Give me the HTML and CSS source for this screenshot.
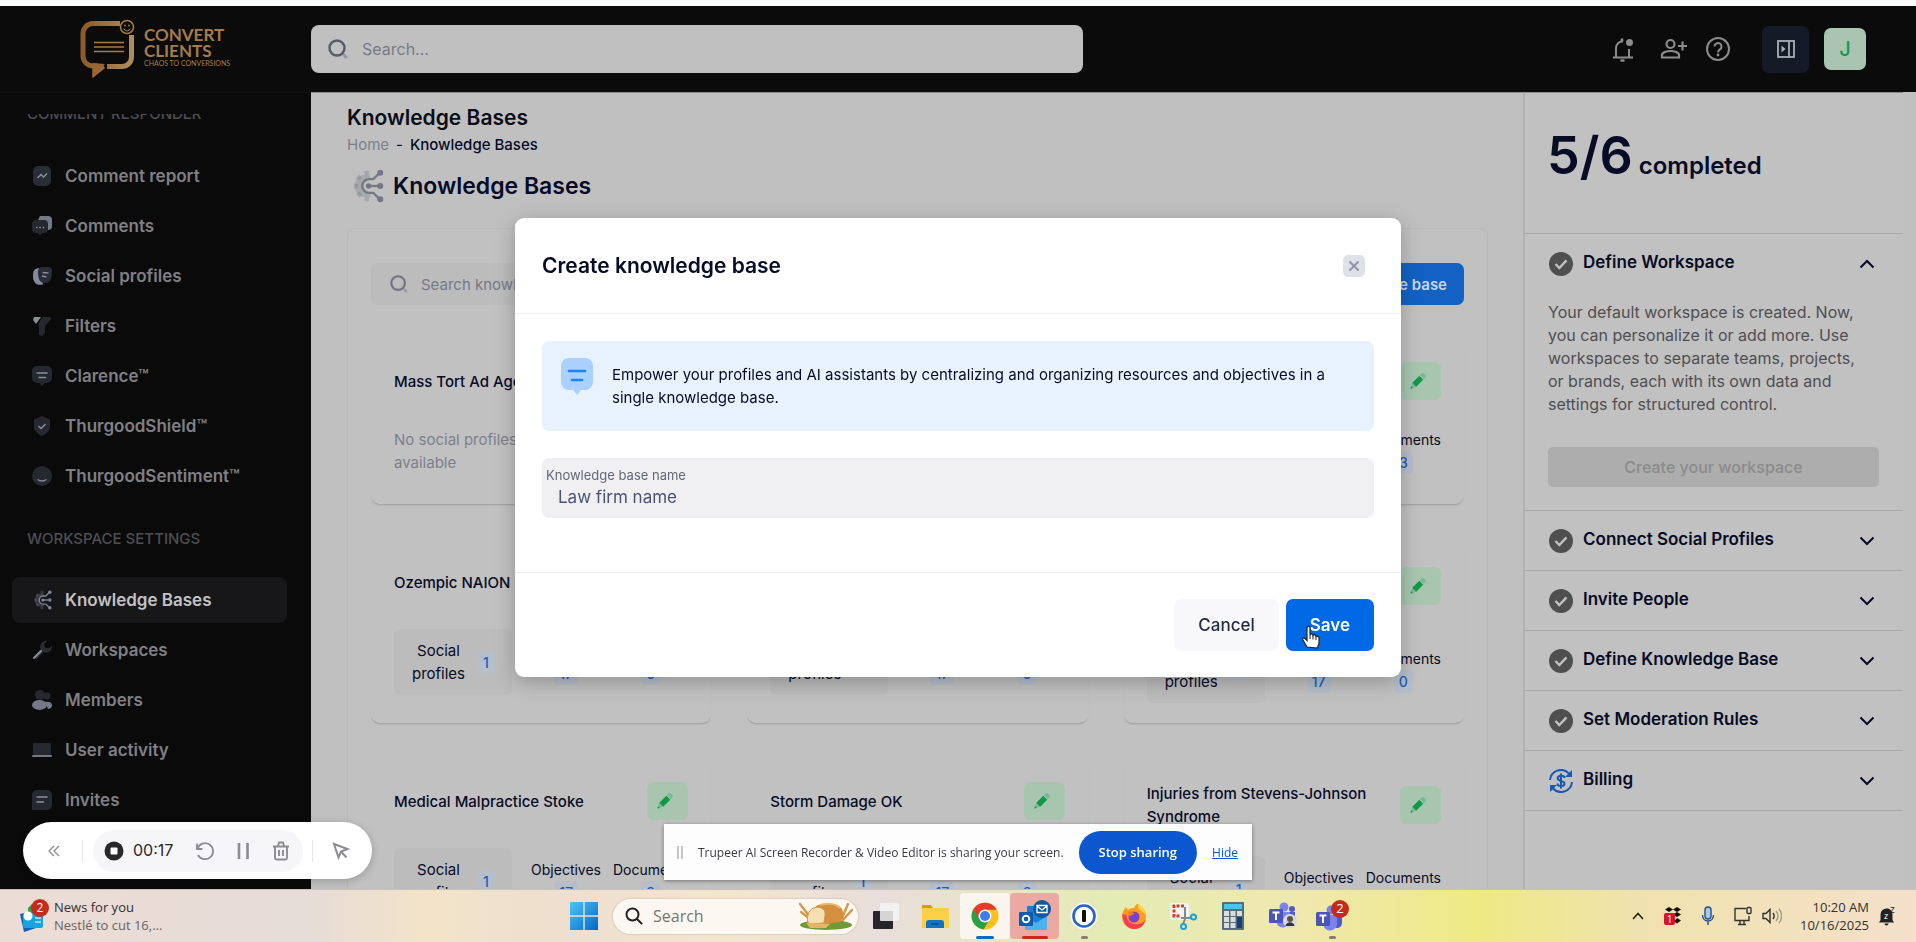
FILE: index.html
```html
<!DOCTYPE html>
<html lang="en">
<head>
  <meta charset="UTF-8" />
  <meta name="viewport" content="width=device-width, initial-scale=1.0"/>
  <title>Knowledge Bases</title>
  <link rel="stylesheet" href="styles.css">
</head>
<body>
  <!-- Shared icons -->
  <svg class="sprite" aria-hidden="true">
    <symbol id="i-search" viewBox="0 0 22 22">
      <circle cx="10" cy="10" r="7.5" fill="none" stroke="currentColor" stroke-width="2.4"/>
      <path d="M16 16l3 3" stroke="currentColor" stroke-width="3" stroke-linecap="round" opacity=".4"/>
    </symbol>
    <symbol id="i-pencil" viewBox="0 0 20 20">
      <path d="M13.6 2.6a1.6 1.6 0 0 1 2.3 0l1.5 1.5a1.6 1.6 0 0 1 0 2.3l-1.6 1.5-3.8-3.8z" fill="#0e9a45" opacity=".3"/>
      <path d="M11.3 4.8l3.9 3.9-7 7-3.9-3.9z" fill="#0e9a45"/>
      <path d="M4.3 11.8l3.9 3.9-4.9 1.6a.6.6 0 0 1-.7-.7z" fill="#0e9a45" opacity=".3"/>
      <path d="M3 15.2l1.8 1.8-1.7.5a.5.5 0 0 1-.6-.6z" fill="#0e9a45"/>
    </symbol>
    <symbol id="i-check" viewBox="0 0 24 24">
      <circle cx="12" cy="12" r="12" fill="#4f4f4f"/>
      <path d="M6.5 12l3.8 4 7.2-7.6" fill="none" stroke="#c0c0c0" stroke-width="2.4"/>
    </symbol>
    <symbol id="i-down" viewBox="0 0 16 10">
      <path d="M1.5 1.5L8 8l6.5-6.5" fill="none" stroke="#060b26" stroke-width="2"/>
    </symbol>
    <symbol id="i-up" viewBox="0 0 16 10">
      <path d="M1.5 8.5L8 2l6.5 6.5" fill="none" stroke="#060b26" stroke-width="2"/>
    </symbol>
    <symbol id="i-knowledge" viewBox="0 0 32 32">
      <path d="M19 5.5H15a10.5 10.5 0 0 0 0 21h4v-3.500a7 7 0 0 1 0-14z" fill="currentColor" opacity=".32"/>
      <path d="M18 3.500A12.500 12.500 0 0 0 18 28.500" fill="none" stroke="currentColor" stroke-width="4" stroke-dasharray="4.500 4.200" opacity=".32"/>
      <g fill="none" stroke="currentColor" stroke-width="2.2">
        <path d="M28 3.5l-6 6h-4a6.5 6.5 0 0 0 0 13h4l6 6"/>
        <path d="M16 16h12"/>
      </g>
      <g fill="currentColor">
        <circle cx="28.5" cy="3.5" r="2.8"/><circle cx="28.5" cy="16" r="2.8"/>
        <circle cx="28.5" cy="28.5" r="2.8"/><circle cx="17.5" cy="16" r="2.6"/>
      </g>
    </symbol>
    <symbol id="i-bubble" viewBox="0 0 20 20">
      <path d="M5 0h10a5 5 0 0 1 5 5v7a5 5 0 0 1-5 5h-2.5L10 20l-2.5-3H5a5 5 0 0 1-5-5V5a5 5 0 0 1 5-5z" fill="#25282f"/>
      <path d="M5 7h10M7 11.5h6.5" stroke="#8a8e9b" stroke-width="1.6" stroke-linecap="round"/>
    </symbol>
    <symbol id="i-teams" viewBox="0 0 28 28">
      <circle cx="16" cy="6" r="4.5" fill="#7b83eb"/><circle cx="24" cy="8" r="3" fill="#5059c9"/>
      <path d="M19 11h8v8a5 5 0 0 1-8 4z" fill="#5059c9"/>
      <path d="M9 11h13v9a7 7 0 0 1-13 3z" fill="#7b83eb"/>
      <rect x="1" y="8" width="14" height="14" rx="1.5" fill="#4b53bc"/>
      <path d="M4.5 11.5h7M8 11.5v7.5" stroke="#fff" stroke-width="2"/>
    </symbol>
  </svg>

  <header class="topbar">
    <div class="brand">
      <svg class="brand-mark" viewBox="0 0 56 60">
        <defs>
          <linearGradient id="gold" x1="0" x2="1">
            <stop offset="0" stop-color="#8f5a2a"/><stop offset="1" stop-color="#b08c5c"/>
          </linearGradient>
        </defs>
        <path d="M40 4.5H13a10 10 0 0 0-10 10v23a10 10 0 0 0 10 9.5h2v7l8.500-7M27 47.500h15a9.500 9.500 0 0 0 9.500-9.500V16" fill="none" stroke="url(#gold)" stroke-width="5"/>
        <path d="M12.500 44v15L25 45z" fill="#9a6433"/>
        <path d="M14 23.500h30M14 28h30M14 32.500h30" stroke="#a57c49" stroke-width="1.3"/>
        <circle cx="47" cy="8" r="6.500" fill="#0b0b0b" stroke="#a57c49" stroke-width="1.5"/>
        <path d="M43.800 9.500a3.300 3.300 0 0 0 6.400 0" fill="none" stroke="#a57c49"/>
        <circle cx="45" cy="6.500" r=".9" fill="#a57c49"/><circle cx="49" cy="6.500" r=".9" fill="#a57c49"/>
      </svg>
      <div class="brand-text">
        <span>CONVERT</span>
        <span>CLIENTS</span>
        <small>CHAOS TO CONVERSIONS</small>
      </div>
    </div>
    <div class="top-search">
      <svg class="icon-22"><use href="#i-search"/></svg>
      <input type="search" placeholder="Search..." aria-label="Search">
    </div>
    <div class="top-actions">
      <button class="icon-btn" aria-label="Notifications">
        <svg width="24" height="26" viewBox="0 0 24 26" fill="none" stroke="currentColor" stroke-width="2">
          <path d="M2 21.500h20M5 21.500V12a6.500 6.500 0 0 1 7-6.500M18 21.500V13"/>
          <path d="M11 2.500v3M9.500 24.500h4" stroke-width="2.6"/>
          <circle cx="18.500" cy="6.500" r="3.500" fill="currentColor" stroke="none"/>
        </svg>
      </button>
      <button class="icon-btn invite" aria-label="Invite people">
        <svg width="28" height="22" viewBox="0 0 28 22" fill="none" stroke="currentColor" stroke-width="2.2">
          <circle cx="10.500" cy="6" r="4"/>
          <path d="M2 19.500v-2.500c0-2.500 5-4 8.500-4s8.500 1.500 8.500 4v2.500zM22.500 3.500v9M18 8h9"/>
        </svg>
      </button>
      <button class="icon-btn help" aria-label="Help">
        <svg width="26" height="26" viewBox="0 0 26 26" fill="none" stroke="currentColor" stroke-width="2">
          <circle cx="13" cy="13" r="11"/>
          <path d="M9.500 10.500a3.500 3.500 0 1 1 5.500 2.900c-1.300.9-2 1.500-2 3"/>
          <circle cx="13" cy="19" r="1.4" fill="currentColor" stroke="none"/>
        </svg>
      </button>
      <button class="panel-btn" aria-label="Toggle panel">
        <svg width="18" height="18" viewBox="0 0 18 18" fill="none" stroke="currentColor" stroke-width="1.8">
          <rect x="1" y="1" width="16" height="16"/>
          <path d="M12 1v16"/><path d="M4.500 5.500v7L8.500 9z" fill="currentColor" stroke="none"/>
        </svg>
      </button>
      <button class="avatar">J</button>
    </div>
  </header>

  <div class="shell">
    <!-- Left navigation -->
    <nav class="sidebar">
      <div class="sidebar-scroll">
        <h6 class="nav-heading">COMMENT RESPONDER</h6>
        <a class="nav-item" href="#">
          <svg class="nav-icon" viewBox="0 0 20 20"><rect x="1" width="18" height="20" rx="5" fill="#2a2d35"/><path d="M5.500 12l3.500-3.500 2.500 2.500L15 7.500" fill="none" stroke="#8a8e9b" stroke-width="1.5"/></svg>
          Comment report
        </a>
        <a class="nav-item" href="#">
          <svg class="nav-icon" viewBox="0 0 20 20"><path d="M8 0h8a4 4 0 0 1 4 4v6a4 4 0 0 1-4 4L6 4z" fill="#747887"/><rect y="4" width="16" height="13" rx="4" fill="#25282f"/><path d="M5.500 16.500L8 20l2.500-3.500z" fill="#25282f"/><path d="M4 11.500h1.500M7.300 11.500h1.500M10.600 11.500h1.500" stroke="#8a8e9b" stroke-width="1.5"/></svg>
          Comments
        </a>
        <a class="nav-item" href="#">
          <svg class="nav-icon" viewBox="0 0 20 20"><path d="M8 2C2 2 1 5 1 10c0 6 3 10 10 8.500z" fill="#8589a0"/><path d="M10 1h6a4 4 0 0 1 4 4c0 8-2 12-7 12-5 0-7-4-7-10 0-4 1-6 4-6z" fill="#2a2d35"/><path d="M10.500 6.500l6 .5M10 10l4.500 1" stroke="#8a8e9b" stroke-width="1.5"/></svg>
          Social profiles
        </a>
        <a class="nav-item" href="#">
          <svg class="nav-icon" viewBox="0 0 20 20"><path d="M2 1h7L4 8 1 4z" fill="#8a8e9b"/><path d="M10.500 1H18a1.200 1.200 0 0 1 1 2l-6 7v7l-3 3-3-1v-9l-1-1.500z" fill="#25282f"/></svg>
          Filters
        </a>
        <a class="nav-item" href="#">
          <svg class="nav-icon"><use href="#i-bubble"/></svg>
          Clarence™
        </a>
        <a class="nav-item" href="#">
          <svg class="nav-icon" viewBox="0 0 20 20"><path d="M10 0l8 3.500V11c0 4-4 7-8 9-4-2-8-5-8-9V3.500z" fill="#25282f"/><path d="M6.500 10l2.500 2.500L13.500 8" fill="none" stroke="#8a8e9b" stroke-width="1.5"/></svg>
          ThurgoodShield™
        </a>
        <a class="nav-item" href="#">
          <svg class="nav-icon" viewBox="0 0 20 20"><circle cx="10" cy="10" r="10" fill="#25282f"/><path d="M5.500 13.500c3 2 6 2 9 0" fill="none" stroke="#8a8e9b" stroke-width="1.5"/></svg>
          ThurgoodSentiment™
        </a>
        <h6 class="nav-heading">WORKSPACE SETTINGS</h6>
        <a class="nav-item active" href="#">
          <svg class="nav-icon"><use href="#i-knowledge"/></svg>
          Knowledge Bases
        </a>
        <a class="nav-item" href="#">
          <svg class="nav-icon" viewBox="0 0 20 20"><path d="M3 18L12 9" stroke="#2a2c32" stroke-width="4"/><path d="M15.500 1a6 6 0 1 0 4.500 5l-3.500 2.500-3.500-1-1-3.500z" fill="#2a2c32"/><path d="M2 18l7-7" stroke="#8a8e9b" stroke-width="2" stroke-linecap="round"/></svg>
          Workspaces
        </a>
        <a class="nav-item" href="#">
          <svg class="nav-icon" viewBox="0 0 20 20"><circle cx="8" cy="5" r="5" fill="#25282f"/><circle cx="15" cy="6" r="3.500" fill="#25282f"/><path d="M13 12c5-1 7 1 7 3.500 0 2-2 3.500-4 3.500z" fill="#747887"/><ellipse cx="7.500" cy="15" rx="7.500" ry="5" fill="#747887"/></svg>
          Members
        </a>
        <a class="nav-item" href="#">
          <svg class="nav-icon" viewBox="0 0 20 20"><rect x="1" y="3" width="18" height="12" rx="1" fill="#25282f"/><rect y="15" width="20" height="2" rx="1" fill="#747887"/></svg>
          User activity
        </a>
        <a class="nav-item" href="#">
          <svg class="nav-icon" viewBox="0 0 20 20"><path d="M5 0h10a5 5 0 0 1 5 5v10a5 5 0 0 1-5 5H0V5a5 5 0 0 1 5-5z" fill="#25282f"/><path d="M5 7h10M5 12h6.500" stroke="#8a8e9b" stroke-width="1.5" stroke-linecap="round"/></svg>
          Invites
        </a>
      </div>
    </nav>

    <!-- Page content -->
    <main class="content">
      <h1 class="page-title">Knowledge Bases</h1>
      <div class="breadcrumb"><a href="#">Home</a><span>-</span><b>Knowledge Bases</b></div>
      <h2 class="section-title"><svg class="icon-32"><use href="#i-knowledge"/></svg>Knowledge Bases</h2>

      <section class="board">
        <div class="board-tools">
          <div class="board-search">
            <svg class="icon-20"><use href="#i-search"/></svg>
            <input type="search" placeholder="Search knowledge base" aria-label="Search knowledge base">
          </div>
          <button class="btn-add">Create knowledge base</button>
        </div>

        <div class="cards">
          <article class="card">
            <div class="card-head"><h3>Mass Tort Ad Agency</h3><button class="edit" aria-label="Edit"><svg class="icon-20"><use href="#i-pencil"/></svg></button></div>
            <div class="card-stats plain">
              <p class="none">No social profiles available</p>
              <div class="stat">Objectives<span class="badge">0</span></div>
              <div class="stat">Documents<span class="badge">0</span></div>
            </div>
          </article>
          <article class="card">
            <div class="card-head"><h3></h3><button class="edit" aria-label="Edit"><svg class="icon-20"><use href="#i-pencil"/></svg></button></div>
          </article>
          <article class="card">
            <div class="card-head"><h3></h3><button class="edit" aria-label="Edit"><svg class="icon-20"><use href="#i-pencil"/></svg></button></div>
            <div class="card-stats plain">
              <p class="none"></p>
              <div class="stat">Objectives<span class="badge">0</span></div>
              <div class="stat">Documents<span class="badge">3</span></div>
            </div>
          </article>

          <article class="card">
            <div class="card-head"><h3>Ozempic NAION</h3><button class="edit" aria-label="Edit"><svg class="icon-20"><use href="#i-pencil"/></svg></button></div>
            <div class="card-stats">
              <div class="social"><span>Social profiles</span><span class="badge">1</span></div>
              <div class="stat">Objectives<span class="badge">17</span></div>
              <div class="stat">Documents<span class="badge">0</span></div>
            </div>
          </article>
          <article class="card">
            <div class="card-head"><h3></h3><button class="edit" aria-label="Edit"><svg class="icon-20"><use href="#i-pencil"/></svg></button></div>
            <div class="card-stats">
              <div class="social"><span>Social profiles</span><span class="badge">1</span></div>
              <div class="stat">Objectives<span class="badge">17</span></div>
              <div class="stat">Documents<span class="badge">0</span></div>
            </div>
          </article>
          <article class="card">
            <div class="card-head tall"><h3></h3><button class="edit" aria-label="Edit"><svg class="icon-20"><use href="#i-pencil"/></svg></button></div>
            <div class="card-stats">
              <div class="social"><span>Social profiles</span><span class="badge">1</span></div>
              <div class="stat">Objectives<span class="badge">17</span></div>
              <div class="stat">Documents<span class="badge">0</span></div>
            </div>
          </article>

          <article class="card">
            <div class="card-head"><h3>Medical Malpractice Stoke</h3><button class="edit" aria-label="Edit"><svg class="icon-20"><use href="#i-pencil"/></svg></button></div>
            <div class="card-stats">
              <div class="social"><span>Social profiles</span><span class="badge">1</span></div>
              <div class="stat">Objectives<span class="badge">17</span></div>
              <div class="stat">Documents<span class="badge">2</span></div>
            </div>
          </article>
          <article class="card">
            <div class="card-head"><h3>Storm Damage OK</h3><button class="edit" aria-label="Edit"><svg class="icon-20"><use href="#i-pencil"/></svg></button></div>
            <div class="card-stats">
              <div class="social"><span>Social profiles</span><span class="badge">1</span></div>
              <div class="stat">Objectives<span class="badge">17</span></div>
              <div class="stat">Documents<span class="badge">2</span></div>
            </div>
          </article>
          <article class="card">
            <div class="card-head"><h3>Injuries from Stevens-Johnson Syndrome</h3><button class="edit" aria-label="Edit"><svg class="icon-20"><use href="#i-pencil"/></svg></button></div>
            <div class="card-stats">
              <div class="social"><span>Social profiles</span><span class="badge">1</span></div>
              <div class="stat">Objectives<span class="badge">17</span></div>
              <div class="stat">Documents<span class="badge">0</span></div>
            </div>
          </article>
        </div>
      </section>
    </main>

    <!-- Setup checklist -->
    <aside class="setup">
      <div class="progress"><strong>5/6</strong> completed</div>
      <div class="step">
        <button class="step-head"><svg class="icon-24"><use href="#i-check"/></svg><span>Define Workspace</span><svg class="chev"><use href="#i-up"/></svg></button>
        <div class="step-body">
          <p>Your default workspace is created. Now, you can personalize it or add more. Use workspaces to separate teams, projects, or brands, each with its own data and settings for structured control.</p>
          <button class="btn-disabled" disabled>Create your workspace</button>
        </div>
      </div>
      <div class="step"><button class="step-head"><svg class="icon-24"><use href="#i-check"/></svg><span>Connect Social Profiles</span><svg class="chev"><use href="#i-down"/></svg></button></div>
      <div class="step"><button class="step-head"><svg class="icon-24"><use href="#i-check"/></svg><span>Invite People</span><svg class="chev"><use href="#i-down"/></svg></button></div>
      <div class="step"><button class="step-head"><svg class="icon-24"><use href="#i-check"/></svg><span>Define Knowledge Base</span><svg class="chev"><use href="#i-down"/></svg></button></div>
      <div class="step"><button class="step-head"><svg class="icon-24"><use href="#i-check"/></svg><span>Set Moderation Rules</span><svg class="chev"><use href="#i-down"/></svg></button></div>
      <div class="step">
        <button class="step-head">
          <svg class="icon-24" viewBox="0 0 24 24" fill="none" stroke="#1559b5" stroke-width="2">
            <path d="M1 11A11 11 0 0 1 20 4.500M23 13A11 11 0 0 1 4 19.500"/>
            <path d="M23 1v7h-7zM1 23v-7h7z" fill="#1559b5" stroke="none"/>
            <path d="M15.500 9c0-1.500-1.500-2.200-3.500-2.200S8.700 7.800 8.700 9.300c0 3.400 6.800 1.900 6.800 5.200 0 1.700-1.500 2.500-3.500 2.500s-3.500-.9-3.500-2.500M12 4.500v15"/>
          </svg>
          <span>Billing</span><svg class="chev"><use href="#i-down"/></svg>
        </button>
      </div>
    </aside>
  </div>

  <!-- Create dialog -->
  <div class="modal-wrap">
    <form class="modal" role="dialog" aria-labelledby="modal-title">
      <div class="modal-head">
        <h2 id="modal-title">Create knowledge base</h2>
        <button type="button" class="close" aria-label="Close">
          <svg width="12" height="12" viewBox="0 0 12 12"><path d="M2 2l8 8M10 2l-8 8" stroke="#8f95a8" stroke-width="2" stroke-linecap="round"/></svg>
        </button>
      </div>
      <div class="modal-body">
        <div class="notice">
          <svg class="notice-icon" viewBox="0 0 32 38">
            <path d="M8 0h16a8 8 0 0 1 8 8v16a8 8 0 0 1-8 8h-4l-4 5-4-5H8a8 8 0 0 1-8-8V8a8 8 0 0 1 8-8z" fill="#a9d0ff"/>
            <path d="M8 13h16M11 22h10" stroke="#1b84ff" stroke-width="2.600" stroke-linecap="round"/>
          </svg>
          <p>Empower your profiles and AI assistants by centralizing and organizing resources and objectives in a single knowledge base.</p>
        </div>
        <div class="field">
          <label for="kb-name">Knowledge base name</label>
          <input id="kb-name" type="text" value="Law firm name">
        </div>
      </div>
      <div class="modal-foot">
        <button type="button" class="btn btn-light">Cancel</button>
        <button type="button" class="btn btn-primary">Save</button>
      </div>
      <svg class="pointer" viewBox="0 0 18 24"><path d="M5 22l-4-7c-1-2 1-3 2.500-1L5 15.500V3c0-2.500 3-2.500 3 0v7c.5-1.500 3-1.500 3 .5 1-1 3-.8 3 1 1-.8 3-.3 3 1.500v5c0 2-1 3-2 5z" fill="#fff" stroke="#222" stroke-width="1.2"/><path d="M8 10v4M11 11v3.500M14 12v3" stroke="#222"/></svg>
    </form>
  </div>

  <!-- Recorder controls -->
  <div class="recorder">
    <button aria-label="Collapse"><svg width="12" height="12" viewBox="0 0 12 12" fill="none" stroke="#8c8c92" stroke-width="1.3"><path d="M6 1L1 6l5 5M11 1L6 6l5 5"/></svg></button>
    <i class="rule"></i>
    <div class="recorder-pill">
      <button aria-label="Stop"><svg width="20" height="20" viewBox="0 0 20 20"><circle cx="10" cy="10" r="9.500" fill="#28282a"/><rect x="6.500" y="6.500" width="7" height="7" rx="1" fill="#fff"/></svg></button>
      <time>00:17</time>
      <button aria-label="Restart"><svg width="20" height="20" viewBox="0 0 20 20" fill="none" stroke="#8c8c92" stroke-width="1.8"><path d="M2.500 7.500A8 8 0 1 1 3 14M2 2.500v5.500h5.500"/></svg></button>
      <button aria-label="Pause"><svg width="20" height="20" viewBox="0 0 20 20" stroke="#8c8c92" stroke-width="2.6"><path d="M6 2v16M14.500 2v16"/></svg></button>
      <button aria-label="Delete"><svg width="20" height="20" viewBox="0 0 20 20" fill="none" stroke="#8c8c92" stroke-width="1.9"><path d="M2 5.500h16M4 5.500v11.500a1.500 1.500 0 0 0 1.500 1.500h9A1.500 1.500 0 0 0 16 17V5.500M7 5l1-3.500h4L13 5M8 9v6M12 9v6"/></svg></button>
    </div>
    <i class="rule"></i>
    <button aria-label="Pointer"><svg width="20" height="20" viewBox="0 0 20 20" fill="none" stroke="#8c8c92" stroke-width="2"><path d="M3 3l4.500 13.500 2.500-6 6.500-2.500zM10 10.500l5.500 6"/></svg></button>
  </div>

  <!-- Screen sharing notice -->
  <div class="share">
    <i class="grip"></i>
    <span>Trupeer AI Screen Recorder &amp; Video Editor is sharing your screen.</span>
    <button>Stop sharing</button>
    <a href="#">Hide</a>
  </div>

  <!-- Taskbar -->
  <footer class="taskbar">
    <div class="news">
      <svg width="30" height="34" viewBox="0 0 30 34">
        <path d="M1 15l14-3 5 16-15 5z" fill="#0a63b0"/>
        <rect x="4" y="14" width="20" height="15" rx="2" fill="#19a3e0"/>
        <path d="M9 9l4-4v9H9z" fill="#2f9e44"/>
        <circle cx="9" cy="17" r="4.500" fill="#fff"/><path d="M16 19h6M16 23h6" stroke="#bfe6f7" stroke-width="1.5"/>
        <circle cx="21" cy="9" r="9" fill="#c42b1c"/>
        <text x="21" y="13" text-anchor="middle" font-size="12" fill="#fff">2</text>
      </svg>
      <div>News for you<small>Nestlé to cut 16,...</small></div>
    </div>

    <div class="dock">
      <button class="app start" aria-label="Start">
        <svg width="28" height="28" viewBox="0 0 28 28"><defs><linearGradient id="win" x1="0" y1="0" x2="1" y2="1"><stop offset="0" stop-color="#4cc6f8"/><stop offset="1" stop-color="#0067c9"/></linearGradient></defs><path d="M0 0h13.300v13.300H0zM14.700 0H28v13.300H14.700zM0 14.700h13.300V28H0zM14.700 14.700H28V28H14.700z" fill="url(#win)"/></svg>
      </button>
      <label class="task-search">
        <svg width="18" height="18" viewBox="0 0 18 18" fill="none" stroke="#222" stroke-width="2"><circle cx="7.500" cy="7.500" r="6"/><path d="M12 12l5 5"/></svg>
        <input type="search" placeholder="Search" aria-label="Search the computer">
        <svg width="56" height="30" viewBox="0 0 56 30">
          <path d="M2 3l10 13M3 11l9 7M50 3l-6 14M54 9L44 20" stroke="#d19a4a" stroke-width="2.4" stroke-linecap="round"/>
          <ellipse cx="28" cy="24" rx="26" ry="5" fill="#6f9a35"/>
          <path d="M18 5c9-4 22-3 26 3 2 5 1 10-2 13l-20 3z" fill="#d4903f"/>
          <path d="M22 4c8-2 16-1 20 3" fill="none" stroke="#e9b873" stroke-width="2"/>
          <path d="M10 14C11 7 20 4 25 8c4 3 1 9 1 14l-13 1c-4 0-4-5-3-9z" fill="#f6e0b3" stroke="#cf9445"/>
          <path d="M8 22l24 1-4 4H12z" fill="#e6b56a"/>
        </svg>
      </label>
      <div class="apps">
        <button class="app" aria-label="Task view"><svg width="28" height="28" viewBox="0 0 28 28"><rect x="1" y="9" width="20" height="18" rx="1" fill="#26262a"/><rect x="8" y="1" width="19" height="18" rx="1" fill="#f5f5f5" opacity=".85"/></svg></button>
        <button class="app" aria-label="File Explorer"><svg width="28" height="28" viewBox="0 0 28 28"><path d="M1 3h9l2 3h15v20H1z" fill="#d79c13"/><rect x="1" y="6" width="27" height="20" rx="1" fill="#fbcf46"/><path d="M5 26v-5a3 3 0 0 1 3-3h12a3 3 0 0 1 3 3v5z" fill="#1272c4"/><path d="M10 22h8" stroke="#0a4f91" stroke-width="1.5"/></svg></button>
        <button class="app running focus" aria-label="Chrome"><svg width="28" height="28" viewBox="0 0 28 28"><circle cx="14" cy="14" r="13.500" fill="#fbc11a"/><path d="M2.300 7.300A13.500 13.500 0 0 0 12.500 27.400L19 17H9z" fill="#28a048"/><path d="M2.300 7.300A13.500 13.500 0 0 1 25.700 7.800H14L9 18z" fill="#e33b2e"/><circle cx="14" cy="14" r="6.500" fill="#fff"/><circle cx="14" cy="14" r="5" fill="#3b7ded"/></svg></button>
        <button class="app running alert" aria-label="Outlook"><svg width="32" height="32" viewBox="0 0 32 32"><rect x="8" y="6" width="19" height="22" rx="1" fill="#1a7fd4"/><path d="M6 16l11 7 11-7v14H6z" fill="#4db3ee"/><rect x="0" y="12" width="14" height="14" rx="1" fill="#0f5cad"/><circle cx="7" cy="19" r="3.300" fill="none" stroke="#fff" stroke-width="2"/><circle cx="23" cy="9" r="9" fill="#0e5a9c"/><path d="M18 5.500h10v7H18zM18 6l5 4 5-4" fill="none" stroke="#fff" stroke-width="1.3"/></svg></button>
        <button class="app running" aria-label="1Password"><svg width="28" height="28" viewBox="0 0 28 28"><circle cx="14" cy="14" r="13.500" fill="#f8f8f8"/><circle cx="14" cy="14" r="10.500" fill="#fff" stroke="#2a62c9" stroke-width="2.6"/><rect x="12" y="8" width="4" height="12" rx="1" fill="#111"/></svg></button>
        <button class="app" aria-label="Firefox"><svg width="26" height="28" viewBox="0 0 26 28"><path d="M17 2c5 3 8 7 8 13a12 12 0 0 1-24 0c0-5 2-8 4-10l2 3c2-2 4-2 6-2 1-2 2-4 4-4z" fill="#ff9b1f"/><path d="M1.500 12c0 8 4 15 12 15 6 0 10-4 11-9-2 3-6 5-11 4-5 0-8-5-8-9z" fill="#f8395a"/><path d="M17 2c5 3 7 7 7.500 11-2-3-5-4-7.500-7z" fill="#ffd43b"/><circle cx="13" cy="15" r="5.500" fill="#7b3fd1"/><path d="M7 10c3-1 5 0 7 2-3 0-3 2-6 2z" fill="#ff7a1a"/></svg></button>
        <button class="app" aria-label="Snipping Tool"><svg width="28" height="28" viewBox="0 0 28 28"><rect x="1" y="1" width="19" height="17" rx="2" fill="#f4f4f4"/><path d="M15 4H5v10h6" fill="none" stroke="#d83b1e" stroke-width="3" stroke-dasharray="3 1.5"/><path d="M16 5v12l-2 5M12 16h8l3-1" fill="none" stroke="#888" stroke-width="2"/><circle cx="24.500" cy="15" r="2.500" fill="none" stroke="#1f9fd6" stroke-width="2"/><circle cx="14.500" cy="24.500" r="2.500" fill="none" stroke="#1f9fd6" stroke-width="2"/></svg></button>
        <button class="app" aria-label="Calculator"><svg width="24" height="28" viewBox="0 0 24 28"><rect x="1" width="22" height="28" rx="1" fill="#5a6b77"/><rect x="3" y="2" width="18" height="5" fill="#49c4ee"/><path d="M3 9h5v5H3zM9.500 9h5v5h-5zM16 9h5v5h-5zM3 15h5v5H3zM9.500 15h5v5h-5zM3 21h5v5H3zM9.500 21h5v5h-5z" fill="#d8dde0"/><path d="M16 15h5v11h-5z" fill="#14407a"/></svg></button>
        <button class="app" aria-label="Teams personal"><svg width="30" height="30" viewBox="0 0 30 30"><use href="#i-teams" width="28" height="28"/><circle cx="22" cy="20" r="7" fill="#d9d9d9"/><circle cx="22" cy="18" r="3" fill="#555"/><path d="M17.500 25c1-5 8-5 9 0z" fill="#333"/></svg></button>
        <button class="app running" aria-label="Teams"><svg width="34" height="32" viewBox="0 0 34 32"><use href="#i-teams" y="4" width="28" height="28"/><circle cx="25" cy="9" r="9" fill="#c42b1c"/><text x="25" y="13" text-anchor="middle" font-size="13" fill="#fff">2</text></svg></button>
      </div>
    </div>

    <div class="tray">
      <svg width="14" height="10" viewBox="0 0 14 10" fill="none" stroke="#222" stroke-width="1.6"><path d="M2 8l5-5.500L12 8"/></svg>
      <svg width="20" height="20" viewBox="0 0 20 20"><path d="M6 1l4 2.500L6 6 2 3.500zM14 1l4 2.500L14 6l-4-2.500zM14 6l4 2.500-4 2.500-4-2.500zM14 12l4 2.500-4 3-3-2z" fill="#111"/><rect x="1" y="7" width="11" height="12" rx="2" fill="#d3162f"/><text x="6.500" y="17" text-anchor="middle" font-size="10" fill="#fff">1</text></svg>
      <svg width="14" height="20" viewBox="0 0 14 20" fill="none" stroke="#24508c" stroke-width="1.4"><rect x="4" y="1" width="6" height="12" rx="3" fill="#a9c9e8"/><path d="M1.500 9c0 8 11 8 11 0M7 15.500V19"/></svg>
      <svg width="20" height="20" viewBox="0 0 20 20" fill="none" stroke="#333" stroke-width="1.4"><path d="M13 2.500H2v12h14V10M7 14.500V18M11 14.500V18M5 18.500h8"/><rect x="14" y="1.500" width="4" height="6" rx="1"/></svg>
      <svg width="20" height="18" viewBox="0 0 20 18" fill="none" stroke="#333" stroke-width="1.4"><path d="M1 6.500h3l4-4v13l-4-4H1zM11 6c1.500 2 1.500 4 0 6"/><path d="M14 4c2.500 3 2.500 7 0 10M17 2c3.500 4 3.500 10 0 14" opacity=".4"/></svg>
      <div class="clock">10:20 AM<br>10/16/2025</div>
      <svg width="18" height="20" viewBox="0 0 18 20"><path d="M2.500 14V8.500A6 6 0 0 1 9 2.500c3 0 5.500 2.500 5.500 6V14l1.500 2.500H1zM6.500 17.500h4a2 2 0 0 1-4 0z" fill="#222"/><text x="6" y="13" font-size="9" fill="#fff">z</text><text x="12" y="7" font-size="10" fill="#222">z</text></svg>
    </div>
  </footer>
</body>
</html>
```

FILE: styles.css
```css
/* RESET & BASE */
* {
  margin: 0; padding: 0;
  box-sizing: border-box;
}
body {
  height: 100vh;
  display: flex; flex-direction: column;
  overflow: hidden;
  border-top: 6px solid #fafcfb;
  background: #c0c0c0;
  color: #060b26;
  font-family: Inter, sans-serif;
  font-size: 16px; line-height: 23px;
}
button, input {
  border: 0; background: none;
  color: inherit; font: inherit;
}
input { outline: none; min-width: 0; width: 100%; }
a { color: inherit; text-decoration: none; }
svg { flex: none; }
.sprite { position: absolute; width: 0; height: 0; }
.icon-20 { width: 20px; height: 20px; }
.icon-22 { width: 22px; height: 22px; }
.icon-24 { width: 24px; height: 24px; }
.icon-32 { width: 34px; height: 34px; }

/* TOP BAR */
.topbar {
  flex: none; height: 86px;
  display: flex; align-items: center;
  background: #0b0b0b;
}
.brand {
  width: 311px; flex: none;
  display: flex; align-items: center; gap: 8px;
  padding-left: 80px;
}
.brand-mark { width: 56px; height: 60px; }
.brand-text {
  display: flex; flex-direction: column;
  padding-bottom: 4px;
  color: #a57c49;
  font-family: Lato, sans-serif;
  font-size: 17px; line-height: 16px; font-weight: 700;
}
.brand-text small { font-size: 7px; line-height: 8px; font-weight: 400; }
.top-search {
  width: 772px; height: 48px;
  display: flex; align-items: center; gap: 13px;
  padding: 0 16px;
  border-radius: 8px;
  background: #c0c0c0; color: #565a6a;
}
.top-search input::placeholder,
.board-search input::placeholder { color: #777a86; opacity: 1; }
.top-actions {
  margin-left: auto; padding-right: 50px;
  display: flex; align-items: center;
  color: #8c8c8c;
}
.icon-btn { display: flex; }
.invite { margin-left: 25px; }
.help { margin-left: 17px; }
.panel-btn {
  width: 47px; height: 47px;
  margin-left: 31px;
  display: flex; align-items: center; justify-content: center;
  border-radius: 7px;
  background: #141b27; color: #aab0b6;
}
.avatar {
  width: 42px; height: 42px;
  margin-left: 15px;
  border-radius: 7px;
  background: #a9c5b2; color: #149a50;
  font-size: 20px; font-weight: 500;
}

.shell { flex: 1; min-height: 0; display: flex; }

/* SIDEBAR */
.sidebar {
  width: 311px; flex: none;
  padding-top: 21px;
  border-top: 1px solid #131315;
  background: #0a0a0b;
}
.sidebar-scroll {
  height: 100%; overflow: hidden;
  padding: 0 24px 0 12px;
  display: flex; flex-direction: column; gap: 4px;
}
.nav-heading {
  flex: none;
  padding: 24px 15px 22px;
  color: #4e4e52;
  font-size: 15px; line-height: 24px; font-weight: 500;
}
.nav-heading:first-child { margin-top: -36px; padding-bottom: 23px; }
.nav-item {
  height: 46px; flex: none;
  display: flex; align-items: center; gap: 13px;
  padding-left: 20px;
  border-radius: 8px;
  color: #808084;
  font-size: 17px; font-weight: 600;
}
.nav-item.active { background: #17171a; color: #c2c2c4; }
.nav-item.active .nav-icon { color: #7f8398; }
.nav-icon { width: 20px; height: 20px; }

/* CONTENT */
.content {
  flex: 1; min-width: 0;
  padding: 11px 35px 0 36px;
  border-top: 1px solid #8a8a8a;
  overflow: hidden;
}
.page-title { font-size: 21px; line-height: 28px; font-weight: 600; color: #0b0d18; }
.breadcrumb {
  display: flex; gap: 7px;
  padding-top: 1px;
  font-size: 15px; line-height: 24px;
}
.breadcrumb a { color: #7d808c; }
.breadcrumb b { font-weight: 500; }
.section-title {
  display: flex; align-items: center; gap: 9px;
  margin: 12px 0 25px; padding-left: 3px;
  font-size: 23px; line-height: 34px; font-weight: 600;
}
.section-title svg { color: #747886; }
.board {
  padding: 34px 23px 0;
  border: 1px solid #b9b9b9; border-radius: 8px;
  background: #c1c1c1;
}
.board-tools { display: flex; justify-content: space-between; margin-bottom: 34px; }
.board-search {
  width: 340px; height: 42px;
  display: flex; align-items: center; gap: 12px;
  padding: 0 18px;
  border-radius: 6px;
  background: #bcbcbd; color: #72757f;
  font-size: 15px;
}
.btn-add {
  height: 42px; padding: 0 17px;
  border-radius: 7px;
  background: #1262c4; color: #c9d6e8;
  font-size: 15px; font-weight: 600;
}

/* CARDS */
.cards { display: grid; grid-template-columns: repeat(3, minmax(0, 1fr)); gap: 36px; }
.card {
  padding: 23px 23px 20px;
  border-radius: 9px;
  box-shadow: 0 2px 2px -1px rgba(0,0,0,0.2);
}
.card-head { display: flex; align-items: center; justify-content: space-between; min-height: 38px; }
.card-head.tall { min-height: 46px; }
.card-head h3 { max-width: 240px; font-size: 15px; font-weight: 500; }
.edit {
  width: 41px; height: 38px; flex: none;
  display: flex; align-items: center;
  padding-left: 8px;
  border-radius: 6px;
  background: #a8c5b0;
}
.card-stats {
  display: flex; align-items: center; gap: 12px;
  margin-top: 28px;
}
.card-stats.plain { padding-bottom: 10px; }
.none { width: 124px; margin-right: auto; color: #7d808c; font-size: 15px; }
.social {
  width: 118px; height: 66px; flex: none;
  display: flex; align-items: center; justify-content: center; gap: 10px;
  margin-right: auto;
  border-radius: 6px;
  background: #bcbcbd;
  text-align: center;
}
.social span:first-child { width: 56px; font-size: 15px; }
.stat {
  display: flex; flex-direction: column; align-items: center;
  font-size: 14px;
}
.badge {
  min-width: 19px; padding: 0 5px;
  border-radius: 5px;
  background: #b6bec9; color: #165fc0;
  font-size: 14px; font-weight: 500; text-align: center;
}

/* SETUP PANEL */
.setup {
  width: 380px; flex: none;
  margin-right: 13px;
  border-left: 2px solid #b2b2b3;
  border-top: 1px solid #8a8a8a;
  background: #c1c1c1;
}
.progress {
  height: 141px;
  padding: 29px 22px 0;
  border-bottom: 1px solid #a9a9a9;
  font-size: 24px; line-height: 68px; font-weight: 600;
}
.progress strong { font-size: 52px; font-weight: 600; }
.step { border-bottom: 1px solid #a9a9a9; }
.step-head {
  width: 100%; height: 59px;
  display: flex; align-items: center; gap: 10px;
  padding: 0 28px 0 24px;
  font-size: 17px; font-weight: 600; text-align: left;
}
.step-head span { flex: 1; padding-bottom: 3px; }
.chev { width: 16px; height: 10px; }
.step-body { padding: 8px 24px 23px 23px; color: #4f4f52; }
.step-body p { padding-right: 12px; font-size: 16px; }
.btn-disabled {
  width: 100%; height: 40px;
  margin-top: 31px;
  border-radius: 5px;
  background: #adadad; color: #8b8b8b;
  font-weight: 500;
}

/* MODAL */
.modal-wrap {
  position: fixed; inset: 218px 0 auto;
  display: flex; justify-content: center;
}
.modal {
  position: relative;
  width: 886px;
  border-radius: 9px;
  background: #fff;
  box-shadow: 0 5px 20px rgba(0,0,0,0.25);
}
.modal-head {
  height: 96px; padding: 0 36px 0 27px;
  display: flex; align-items: center; justify-content: space-between;
  border-bottom: 1px solid #efeff2;
}
.modal-head h2 { font-size: 21px; font-weight: 600; }
.close {
  width: 22px; height: 22px;
  display: flex; align-items: center; justify-content: center;
  border-radius: 5px; background: #dfe1e8;
}
.modal-body { padding: 27px 27px 54px; }
.notice {
  display: flex; gap: 19px;
  padding: 17px 19px 22px;
  border-radius: 7px;
  background: #e7f2fd;
}
.notice p { padding-top: 5px; font-size: 15px; }
.notice-icon { width: 32px; height: 38px; }
.field {
  margin-top: 27px; height: 60px;
  padding-top: 7px;
  border-radius: 7px;
  background: #f0f0f2;
}
.field label { display: block; padding-left: 4px; font-size: 13px; line-height: 20px; color: #63667a; }
.field input {
  display: block; height: 24px; padding-left: 16px;
  color: #4b5275; font-size: 17px;
}
.modal-foot {
  display: flex; justify-content: flex-end; gap: 7px;
  padding: 26px 27px;
  border-top: 1px solid #efeff2;
}
.btn { height: 52px; padding: 0 24px; border-radius: 7px; font-size: 17px; }
.btn-light { background: #f8f8fa; color: #252b45; font-weight: 500; }
.btn-primary { background: #006ae6; color: #fff; font-weight: 600; }
.pointer { position: absolute; width: 18px; height: 24px; right: 81px; bottom: 28px; }

/* RECORDER */
.recorder {
  position: fixed; left: 23px; bottom: 63px;
  height: 57px; padding: 0 21px 0 25px;
  display: flex; align-items: center;
  border-radius: 29px;
  background: #fff;
  box-shadow: 0 2px 8px rgba(0,0,0,0.2);
}
.recorder button { display: flex; }
.rule { width: 1px; height: 22px; margin: 0 10px 0 22px; background: #e6e6ea; }
.recorder-pill {
  height: 42px; padding: 0 12px 0 11px;
  display: flex; align-items: center; gap: 18px;
  border-radius: 21px; background: #f6f6f9;
}
.recorder-pill time { width: 44px; margin-left: -9px; color: #29292c; font-size: 16px; }
.recorder-pill + .rule { margin: 0 18px 0 9px; }

/* SHARE BAR */
.share {
  position: fixed; left: 50%; bottom: 62px;
  transform: translateX(-50%);
  height: 56px; padding: 0 14px 0 13px;
  display: flex; align-items: center; gap: 15px;
  background: #fdfdfe; color: #3c3c40;
  box-shadow: 0 1px 4px rgba(0,0,0,0.4);
  font-family: "Open Sans", sans-serif; font-size: 12px; white-space: nowrap;
}
.grip { width: 6px; height: 13px; border: solid #c4c4c8; border-width: 0 2px; }
.share button {
  height: 43px; padding: 0 20px;
  border-radius: 22px;
  background: #0b57d0; color: #fff;
  font-size: 13px; font-weight: 600;
}
.share a { color: #0b57d0; text-decoration: underline; }

/* TASKBAR */
.taskbar {
  position: relative;
  flex: none; height: 53px;
  display: grid; grid-template-columns: 1fr auto 1fr; align-items: center;
  border-top: 1px solid #c9bfb4;
  background: linear-gradient(90deg, #ecdcd6 0, #e6dcd8 16%, #f2e3c8 22%, #eedfd0 30%, #f3e6cd 38%, #e8dedb 46%, #e9e6bf 54%, #e3ecb4 58%, #f0e8ae 68%, #eeea84 77%, #f0e2ac 85%, #f4e0cb 100%);
  color: #33302e;
  font-family: "Open Sans", sans-serif;
}
.news {
  display: flex; align-items: center; gap: 5px;
  padding-left: 19px;
  font-size: 13px; line-height: 18px;
}
.news small { display: block; color: #6c625d; font-size: 13px; }
.dock { display: flex; align-items: center; }
.app {
  position: relative;
  flex: 1; height: 46px;
  display: flex; align-items: center; justify-content: center;
}
.start { width: 49px; flex: none; margin-right: 5px; }
.task-search {
  width: 245px; height: 35px;
  display: flex; align-items: center; gap: 10px;
  padding: 0 4px 0 12px; margin-right: 3px;
  border-radius: 18px;
  background: #fcf8f1;
  box-shadow: 0 0 1px 1px rgba(120,100,70,0.15);
  font-size: 16px;
}
.apps { display: flex; width: 496px; }
.running::after {
  content: ""; position: absolute; bottom: 0; left: 50%;
  width: 7px; height: 3px; margin-left: -3px;
  border-radius: 2px; background: #857f6c;
}
.focus { background: #faf6ef; border-radius: 4px; }
.focus::after { width: 18px; margin-left: -9px; background: #0a6cc4; }
.alert { background: #eba9a2; border-radius: 4px; }
.alert::after { width: 26px; margin-left: -13px; background: #c42b1c; }
.tray {
  justify-self: end;
  display: flex; align-items: center; gap: 18px;
  padding-right: 20px;
}
.tray svg:nth-of-type(4) { margin-right: -9px; }
.clock { font-size: 13px; line-height: 18px; text-align: right; }
.clock + svg { margin-left: -9px; }
```
